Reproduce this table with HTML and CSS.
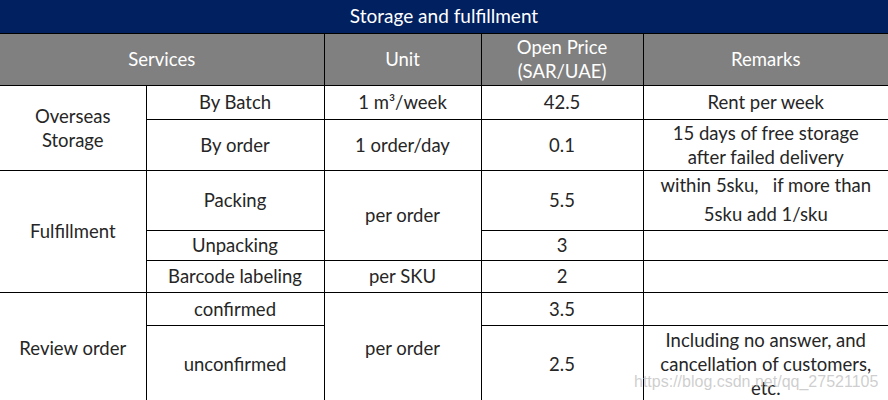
FILE: index.html
```html
<!DOCTYPE html>
<html>
<head>
<meta charset="utf-8">
<link rel="stylesheet" href="styles.css">
</head>
<body>
<div class="sheet">
<table class="price">
  <colgroup>
    <col class="c1"><col class="c2"><col class="c3"><col class="c4"><col class="c5">
  </colgroup>
  <tr class="r-title"><th colspan="5" class="title">Storage and fulfillment</th></tr>
  <tr class="r-head">
    <th colspan="2" class="head">Services</th>
    <th class="head">Unit</th>
    <th class="head">Open Price<br>(SAR/UAE)</th>
    <th class="head">Remarks</th>
  </tr>
  <tr class="r1">
    <td rowspan="2" class="first">Overseas<br>Storage</td>
    <td>By Batch</td>
    <td>1 m³/week</td>
    <td>42.5</td>
    <td class="last">Rent per week</td>
  </tr>
  <tr class="r2">
    <td>By order</td>
    <td>1 order/day</td>
    <td>0.1</td>
    <td class="last">15 days of free storage<br>after failed delivery</td>
  </tr>
  <tr class="r3">
    <td rowspan="3" class="first">Fulfillment</td>
    <td>Packing</td>
    <td rowspan="2">per order</td>
    <td>5.5</td>
    <td class="last wide">within 5sku,&nbsp;&nbsp; if more than<br>5sku add 1/sku</td>
  </tr>
  <tr class="r4">
    <td>Unpacking</td>
    <td>3</td>
    <td class="last"></td>
  </tr>
  <tr class="r5">
    <td>Barcode labeling</td>
    <td>per SKU</td>
    <td>2</td>
    <td class="last"></td>
  </tr>
  <tr class="r6">
    <td rowspan="2" class="first">Review order</td>
    <td>confirmed</td>
    <td rowspan="2">per order</td>
    <td>3.5</td>
    <td class="last"></td>
  </tr>
  <tr class="r7">
    <td>unconfirmed</td>
    <td>2.5</td>
    <td class="last">Including no answer, and<br>cancellation of customers,<br>etc.</td>
  </tr>
</table>
<div class="watermark">https://blog.csdn.net/qq_27521105</div>
</div>
</body>
</html>
```
FILE: styles.css
```css
html, body {
  margin: 0;
  padding: 0;
  background: #ffffff;
}
body {
  width: 888px;
  height: 400px;
  overflow: hidden;
}
.sheet {
  position: relative;
  width: 888px;
}
.price {
  width: 888px;
  table-layout: fixed;
  border-collapse: collapse;
  font-family: Lato, "Open Sans", sans-serif;
  font-size: 18.5px;
  color: #262626;
}
.c1 { width: 146px; }
.c2 { width: 178px; }
.c3 { width: 157px; }
.c4 { width: 162px; }
.c5 { width: 245px; }

.price th, .price td {
  border: 1px solid #000;
  padding: 0;
  text-align: center;
  vertical-align: middle;
  line-height: 24px;
  font-weight: normal;
  overflow: hidden;
  white-space: nowrap;
}
.price .first { border-left: none; }
.price .last { border-right: none; }

.title {
  background: #002060;
  color: #fff;
  font-size: 19px;
  border-top: none !important;
  border-left: none !important;
  border-right: none !important;
}
.head {
  background: #808080;
  color: #fff;
  font-size: 18.5px;
  line-height: 24px !important;
}
.r-head th:first-child { border-left: none; }
.r-head th:last-child { border-right: none; }

.r-title { height: 33px; }
.r-head { height: 52px; }
.r1 { height: 34px; }
.r2 { height: 51px; }
.r3 { height: 60px; }
.r4 { height: 30px; }
.r5 { height: 32px; }
.r6 { height: 33px; }
.r7 { height: 78px; }

.wide { line-height: 29px !important; }

.watermark {
  position: absolute;
  left: 634px;
  top: 373px;
  font-family: "Liberation Sans", Arial, sans-serif;
  font-size: 16px;
  color: rgba(190, 190, 190, 0.75);
  white-space: nowrap;
}
```
